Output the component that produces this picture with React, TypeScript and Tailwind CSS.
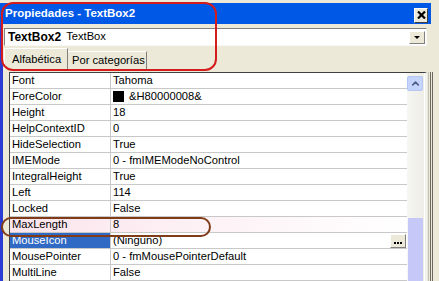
import { ChevronUp } from 'lucide-react'

type Prop = { nombre: string; valor: string; color?: boolean; sel?: boolean; marca?: boolean; boton?: boolean }

const props: Prop[] = [
  { nombre: 'Font', valor: 'Tahoma' },
  { nombre: 'ForeColor', valor: '&H80000008&', color: true },
  { nombre: 'Height', valor: '18' },
  { nombre: 'HelpContextID', valor: '0' },
  { nombre: 'HideSelection', valor: 'True' },
  { nombre: 'IMEMode', valor: '0 - fmIMEModeNoControl' },
  { nombre: 'IntegralHeight', valor: 'True' },
  { nombre: 'Left', valor: '114' },
  { nombre: 'Locked', valor: 'False' },
  { nombre: 'MaxLength', valor: '8', marca: true },
  { nombre: 'MouseIcon', valor: '(Ninguno)', sel: true, boton: true },
  { nombre: 'MousePointer', valor: '0 - fmMousePointerDefault' },
  { nombre: 'MultiLine', valor: 'False' },
]

export default function App() {
  return (
    <div className="relative w-[439px] h-[281px] overflow-hidden bg-[#ece9d8] font-['Liberation_Sans',Arial,sans-serif] text-[11.2px] text-black leading-none">
      {/* Barra de título */}
      <div className="h-[3px]" />
      <div className="flex h-[21px] w-[431px] items-center justify-between bg-[#0058e6] pl-[5px] pr-[3px]">
        <span className="text-[11.5px] font-bold text-white">Propiedades - TextBox2</span>
        <div className="mt-[3px] flex h-[15px] w-[14px] items-center justify-center border border-t-white border-l-white border-r-[#404040] border-b-[#404040] bg-[#ece9d8]">
          <svg width="9" height="8" viewBox="0 0 9 8"><path d="M1 0.5 L8 7.5 M8 0.5 L1 7.5" stroke="#000" strokeWidth="2.2" /></svg>
        </div>
      </div>

      <div className="flex">
        <div className="w-[3px] h-[260px] bg-[#2b3cd4]" />
        <div className="flex-1">
          {/* Combo del objeto */}
          <div className="ml-[1px] mt-[4px] flex h-[18px] w-[423px] items-center border border-t-[#808080] border-l-[#808080] border-r-[#f8f8f8] border-b-[#f8f8f8] bg-white pl-[3px] pr-[1px]">
            <span className="text-[12px] font-bold">TextBox2</span>
            <span className="ml-[5px]">TextBox</span>
            <div className="ml-auto flex h-[13px] w-[16px] items-center justify-center border border-t-white border-l-white border-r-[#808080] border-b-[#808080] bg-[#ece9d8]">
              <svg width="6" height="3" viewBox="0 0 6 3"><path d="M0 0 H6 L3 3 Z" fill="#000" /></svg>
            </div>
          </div>

          {/* Pestañas */}
          <div className="ml-[1px] mt-[2px] flex h-[22px] items-end">
            <div className="flex h-[22px] w-[64px] items-center border-t border-l border-white border-r border-r-[#808080] pl-[7px] pt-[1px]">Alfabética</div>
            <div className="flex h-[19px] w-[79px] items-center border-t border-white border-r border-r-[#808080] pl-[4px]">Por categorías</div>
          </div>

          {/* Rejilla de propiedades */}
          <div className="flex pl-[6px] pt-[2px]">
            <div className="flex w-[418px] border-l border-t border-l-[#404040] border-t-[#404040] border-r-2 border-r-[#f2f2ee] bg-white">
              <div className="w-[397px]">
                {props.map(p => (
                  <div key={p.nombre} className={`flex h-[16px] border-b border-[#c8c8c8] ${p.marca ? 'bg-linear-to-r from-[#fbe4ec] via-[#fdf2f6] to-white' : ''}`}>
                    <div className={`flex w-[101px] items-center border-r border-[#c8c8c8] pl-[2px] ${p.sel ? 'bg-[#316ac5] text-white' : ''}`}>{p.nombre}</div>
                    <div className="flex flex-1 items-center pl-[2px]">
                      {p.color && <span className="mr-[5px] h-[11px] w-[11px] bg-black" />}
                      <span>{p.valor}</span>
                      {p.boton && (
                        <div className="ml-auto mr-[1px] flex h-[14px] w-[16px] items-end justify-center gap-[1px] border border-t-white border-l-white border-r-[#808080] border-b-[#808080] bg-[#ece9d8] pb-[3px]">
                          <span className="h-[2px] w-[2px] bg-black" />
                          <span className="h-[2px] w-[2px] bg-black" />
                          <span className="h-[2px] w-[2px] bg-black" />
                        </div>
                      )}
                    </div>
                  </div>
                ))}
              </div>
              {/* Barra de desplazamiento */}
              <div className="flex w-[17px] flex-col bg-linear-to-r from-[#f6f6f2] to-[#eeede6] pt-[3px]">
                <div className="flex h-[15px] w-[16px] items-center justify-center rounded-[2px] border border-[#b4c6f2] bg-[#c4d4fc]">
                  <ChevronUp size={11} strokeWidth={3.5} color="#4a5f8c" />
                </div>
                <div className="flex-1" />
                <div className="ml-[1px] h-[63px] w-[15px] bg-[#c6c9f7]" />
              </div>
            </div>
            <div className="ml-[1px] w-[1px] bg-[#c4c2b4]" />
            <div className="ml-[1px] w-[1px] bg-[#6a6a62]" />
            <div className="ml-[1px] w-[1px] bg-[#6a6a62]" />
          </div>
        </div>
      </div>

      {/* Marcas de anotación */}
      <div className="absolute left-[1px] top-[2px] h-[69px] w-[216px] rounded-[12px] border-2 border-[#d41c1c]" />
      <div className="absolute left-[1px] top-[217px] h-[20px] w-[210px] rounded-[10px] border-2 border-[#803c18]" />
    </div>
  )
}
